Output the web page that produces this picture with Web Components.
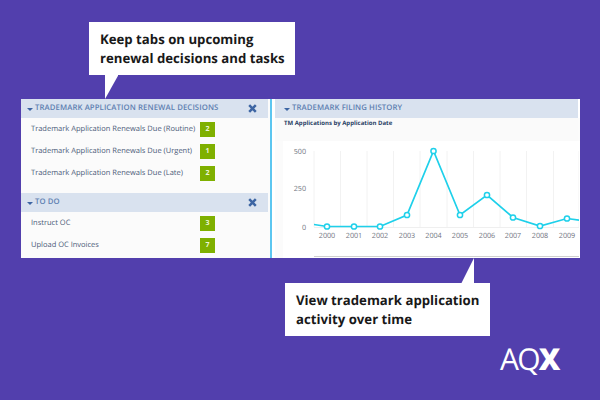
<!DOCTYPE html>
<html>
<head>
<meta charset="utf-8">
<style>
  html, body { margin: 0; padding: 0; background: #523fad; }
  body { font-family: "Open Sans", sans-serif; text-rendering: geometricPrecision; }
</style>
</head>
<body>
<promo-stage>
  <call-out style="--left:89px;--width:206px;" tail="down">Keep tabs on upcoming<br>renewal decisions and tasks</call-out>
  <dash-board>
    <div slot="left">
      <dash-panel title="TRADEMARK APPLICATION RENEWAL DECISIONS" closable>
        <task-row count="2">Trademark Application Renewals Due (Routine)</task-row>
        <task-row count="1">Trademark Application Renewals Due (Urgent)</task-row>
        <task-row count="2">Trademark Application Renewals Due (Late)</task-row>
      </dash-panel>
      <dash-panel title="TO DO" closable style="margin-top:6px">
        <task-row count="3">Instruct OC</task-row>
        <task-row count="7">Upload OC Invoices</task-row>
      </dash-panel>
    </div>
    <div slot="right">
      <dash-panel title="TRADEMARK FILING HISTORY" flush>
        <filing-chart></filing-chart>
      </dash-panel>
    </div>
  </dash-board>
  <call-out style="--left:285px;--width:205px;" tail="up">View trademark application<br>activity over time</call-out>
  <aqx-logo></aqx-logo>
</promo-stage>

<script>
class PromoStage extends HTMLElement {
  connectedCallback() {
    this.attachShadow({ mode: 'open' });
    this.shadowRoot.innerHTML = `
      <style>
        :host { display: block; width: 600px; height: 400px; overflow: hidden; box-sizing: border-box; padding-top: 22px; background: #523fad; }
        .wrap { display: flex; flex-direction: column; }
      </style>
      <div class="wrap"><slot></slot></div>`;
  }
}

class CallOut extends HTMLElement {
  connectedCallback() {
    this.attachShadow({ mode: 'open' });
    const up = this.getAttribute('tail') === 'up';
    const tail = up
      ? `<svg style="right:15px;top:-25px" width="14" height="26" viewBox="0 0 14 26"><polygon points="0,26 13,0 13,26" fill="#fff"/></svg>`
      : `<svg style="left:15px;bottom:-25px" width="14" height="26" viewBox="0 0 14 26"><polygon points="1,0 15,0 1,25" fill="#fff"/></svg>`;
    this.shadowRoot.innerHTML = `
      <style>
        :host { display: block; position: relative; box-sizing: border-box; height: 53px;
          margin-left: var(--left); width: var(--width); background: #fff; color: #191919;
          padding: 8px 0 0 11px; font: 700 13.2px/18.5px "Open Sans", sans-serif; white-space: nowrap; z-index: 2; }
        svg { position: absolute; display: block; }
      </style>
      <slot></slot>${tail}`;
  }
}

class DashBoard extends HTMLElement {
  connectedCallback() {
    this.attachShadow({ mode: 'open' });
    this.shadowRoot.innerHTML = `
      <style>
        :host { display: grid; grid-template-columns: 249px 2px 1fr; box-sizing: border-box; margin: 24px 0 25px 21px;
          width: 559px; height: 159px; background: #fbfbfb; overflow: hidden; }
        .rule { background: #5cc6f0; }
        .right { padding-left: 3px; background: #fff; }
      </style>
      <div class="left"><slot name="left"></slot></div>
      <div class="rule"></div>
      <div class="right"><slot name="right"></slot></div>`;
  }
}

class DashPanel extends HTMLElement {
  connectedCallback() {
    this.attachShadow({ mode: 'open' });
    const flush = this.hasAttribute('flush');
    const x = this.hasAttribute('closable')
      ? `<svg class="x" width="9" height="9" viewBox="0 0 9 9"><path d="M1.2 1.2 7.8 7.8M7.8 1.2 1.2 7.8" stroke="#3d65a3" stroke-width="2.5"/></svg>`
      : '';
    this.shadowRoot.innerHTML = `
      <style>
        :host { display: block; }
        .head { display: flex; align-items: center; box-sizing: border-box; height: 19px; padding-top: 1px; background: #d9e2ef; color: #5e7fb1;
          font: 600 7.75px/1 "Open Sans", sans-serif; letter-spacing: .1px; padding-left: ${flush ? 9 : 6}px; margin-right: 2px; white-space: nowrap; }
        .caret { width: 0; height: 0; border: 3px solid transparent; border-top: 3.5px solid #3d65a3; border-bottom: 0; margin: 1px 2px 0 0; }
        .x { margin-left: auto; margin-right: 11px; margin-top: -1px; }
        .body { padding-top: ${flush ? 0 : 3}px; }
      </style>
      <div class="head"><span class="caret"></span>${this.getAttribute('title')}${x}</div>
      <div class="body"><slot></slot></div>`;
  }
}

class TaskRow extends HTMLElement {
  connectedCallback() {
    this.attachShadow({ mode: 'open' });
    this.shadowRoot.innerHTML = `
      <style>
        :host { display: flex; height: 22px; box-sizing: border-box; padding: 1px 0 0 10px; color: #4a5a78;
          font: 400 7.5px/11px "Open Sans", sans-serif; white-space: nowrap; }
        .text { width: 169px; padding-top: 1.5px; }
        .badge { width: 15px; height: 15px; background: #7fb000; color: #eef6d8; font: 700 7px/15px "Open Sans", sans-serif; text-align: center; }
      </style>
      <div class="text"><slot></slot></div>
      <div class="badge">${this.getAttribute('count')}</div>`;
  }
}

class FilingChart extends HTMLElement {
  connectedCallback() {
    this.attachShadow({ mode: 'open' });
    const pts = [[327,226.5],[354,226.5],[380,226.5],[407,215],[433.5,151],[460,215],[487,195],[513,217.5],[540,226],[567,218.5]];
    const years = ['2000','2001','2002','2003','2004','2005','2006','2007','2008','2009'];
    const ox = 283, oy = 141;
    const line = [[314,224.5], ...pts, [582,220.5]].map(p => `${p[0]-ox},${p[1]-oy}`).join(' ');
    const grid = [340.5,367,393.5,420,447,473.5,500,526.5,553.5].concat([314,579])
      .map(x => `<line x1="${x-ox}" x2="${x-ox}" y1="10" y2="86" stroke="#f2f2f2"/>`).join('');
    const dots = pts.map(p => `<circle cx="${p[0]-ox}" cy="${p[1]-oy}" r="2.6" fill="#fff" stroke="#1ed0ea" stroke-width="1.5"/>`).join('');
    const labels = years.map((y, i) => `<text x="${pts[i][0]-ox}" y="96.5" text-anchor="middle">${y}</text>`).join('');
    this.shadowRoot.innerHTML = `
      <style>
        :host { display: block; background: #fbfbfb; }
        .sub { height: 23px; box-sizing: border-box; padding: 0 0 0 9px; margin-right: 2px; background: #fafafa; color: #2b4266;
          font: 700 6px/11px "Open Sans", sans-serif; white-space: nowrap; }
        .plot { margin-left: 8px; background: #fff; height: 118px; }
        svg { display: block; }
        text { font: 400 7.2px "Open Sans", sans-serif; fill: #6f7480; }
      </style>
      <div class="sub">TM Applications by Application Date</div>
      <div class="plot">
        <svg width="296" height="118" viewBox="0 0 296 118">
          ${grid}
          <line x1="31" x2="296" y1="86.5" y2="86.5" stroke="#efefef"/>
          <text x="23" y="13" text-anchor="end">500</text>
          <text x="23" y="50" text-anchor="end">250</text>
          <text x="23" y="88.5" text-anchor="end">0</text>
          <polyline points="${line}" fill="none" stroke="#1ed0ea" stroke-width="1.7"/>
          ${dots}
          ${labels}
          <line x1="31" x2="296" y1="115.5" y2="115.5" stroke="#cfcfcf"/>
        </svg>
      </div>`;
  }
}

class AqxLogo extends HTMLElement {
  connectedCallback() {
    this.attachShadow({ mode: 'open' });
    this.shadowRoot.innerHTML = `
      <style>
        :host { display: block; margin: 1px 0 0 500px; color: #fff; font: 400 30px/44px "Open Sans", sans-serif; letter-spacing: -1.8px; white-space: nowrap; }
        b { font-weight: 800; }
      </style>
      AQ<b>X</b>`;
  }
}

customElements.define('promo-stage', PromoStage);
customElements.define('call-out', CallOut);
customElements.define('dash-board', DashBoard);
customElements.define('dash-panel', DashPanel);
customElements.define('task-row', TaskRow);
customElements.define('filing-chart', FilingChart);
customElements.define('aqx-logo', AqxLogo);
</script>
</body>
</html>
